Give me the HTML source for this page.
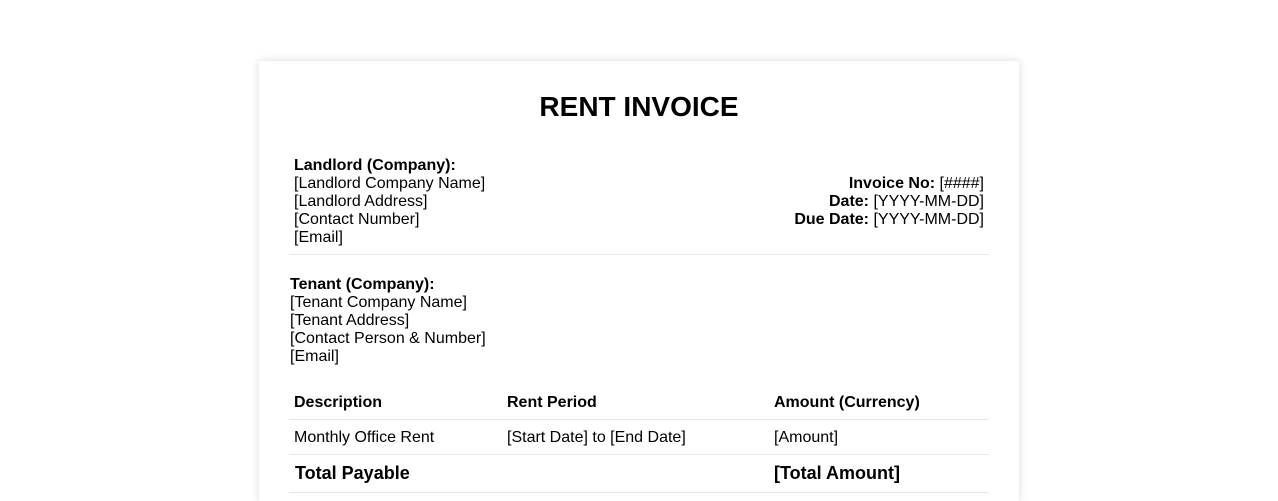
<!DOCTYPE html>
<html><head><meta charset="utf-8"><style>
html,body{margin:0;padding:0;background:#fff;width:1278px;height:501px;overflow:hidden;font-family:"Liberation Sans",Arial,sans-serif;color:#000}
.card{position:absolute;left:259px;top:61px;width:760px;height:440px;background:#fff;box-shadow:0 0 8px rgba(0,0,0,0.15)}
.a{position:absolute;font-size:16px;line-height:18px;white-space:nowrap}
.hr{position:absolute;left:289px;width:700px;height:1px;background:#e8e8e8}
h1{position:absolute;left:259px;width:760px;top:89px;margin:0;text-align:center;font-size:28px;line-height:36px;font-weight:bold}
b{font-weight:bold}
</style></head><body>
<div class="card"></div>
<h1>RENT INVOICE</h1>
<div class="a" style="left:294px;top:157px"><b>Landlord (Company):</b><br>[Landlord Company Name]<br>[Landlord Address]<br>[Contact Number]<br>[Email]</div>
<div class="a" style="right:294px;top:175px;text-align:right"><b>Invoice No:</b> [####]<br><b>Date:</b> [YYYY-MM-DD]<br><b>Due Date:</b> [YYYY-MM-DD]</div>
<div class="hr" style="top:254px"></div>
<div class="a" style="left:290px;top:276px"><b>Tenant (Company):</b><br>[Tenant Company Name]<br>[Tenant Address]<br>[Contact Person &amp; Number]<br>[Email]</div>
<div class="a" style="left:294px;top:394px"><b>Description</b></div>
<div class="a" style="left:507px;top:394px"><b>Rent Period</b></div>
<div class="a" style="left:774px;top:394px"><b>Amount (Currency)</b></div>
<div class="hr" style="top:419px"></div>
<div class="a" style="left:294px;top:429px">Monthly Office Rent</div>
<div class="a" style="left:507px;top:429px">[Start Date] to [End Date]</div>
<div class="a" style="left:774px;top:429px">[Amount]</div>
<div class="hr" style="top:454px"></div>
<div class="a" style="left:295px;top:462px;font-size:18px;line-height:22px"><b>Total Payable</b></div>
<div class="a" style="left:774px;top:462px;font-size:18px;line-height:22px"><b>[Total Amount]</b></div>
<div class="hr" style="top:492px"></div>
</body></html>
